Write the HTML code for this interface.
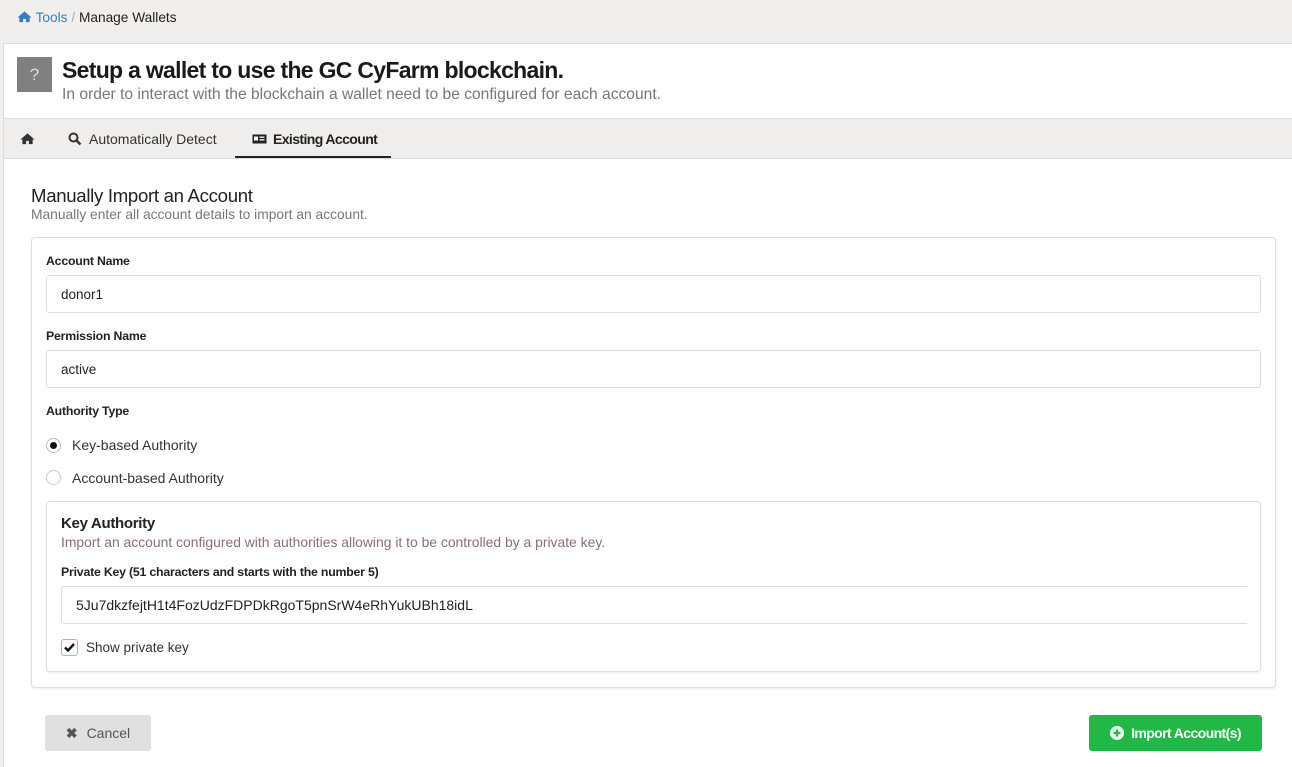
<!DOCTYPE html>
<html><head><meta charset="utf-8"><style>
*{box-sizing:border-box;margin:0;padding:0}
html,body{width:1292px;height:767px;overflow:hidden}
body{background:#f0efee;font-family:"Liberation Sans",sans-serif;color:#222;position:relative;font-size:13px}
.a{position:absolute;white-space:nowrap}
.inp{position:absolute;border:1px solid #ddd;border-radius:3px;background:#fff;font-size:13px;padding-left:14px;display:flex;align-items:center;color:#222}
.lbl{position:absolute;font-weight:bold;font-size:12.3px;letter-spacing:-0.2px}
</style></head><body>
<div class="a" style="left:17px;top:10px;font-size:13.7px"><svg width="15" height="13" viewBox="0 0 16 13" style="vertical-align:-1px"><path d="M8 1L0.5 7.5h2V12.5h4V9h3v3.5h4V7.5h2z" fill="#3a7bbf"/></svg> <span style="color:#3a7bbf">Tools</span> <span style="color:#aaa">/</span> Manage Wallets</div>
<div class="a" style="left:3px;top:43px;width:1289px;height:724px;background:#fff;border:1px solid #ddd;border-right:none;border-bottom:none"></div>
<div class="a" style="left:17px;top:57px;width:35px;height:35px;background:#808080;color:#ddd;font-size:17px;text-align:center;line-height:35px">?</div>
<div class="a" style="left:62px;top:57px;font-size:23px;font-weight:bold;letter-spacing:-0.7px;color:#1a1a1a">Setup a wallet to use the GC CyFarm blockchain.</div>
<div class="a" style="left:62px;top:86px;font-size:15.6px;color:#777">In order to interact with the blockchain a wallet need to be configured for each account.</div>
<div class="a" style="left:4px;top:118px;width:1288px;height:41px;background:#efeeed;border-top:1px solid #ddd;border-bottom:1px solid #ddd"></div>
<svg class="a" style="left:20px;top:132px" width="15" height="13" viewBox="0 0 16 13"><path d="M8 1L0.5 7.5h2V12.5h4V9h3v3.5h4V7.5h2z" fill="#333"/></svg>
<svg class="a" style="left:68px;top:132px" width="14" height="14" viewBox="0 0 14 14"><circle cx="5.5" cy="5.5" r="4" fill="none" stroke="#333" stroke-width="2"/><path d="M8.5 8.5L12.5 12.5" stroke="#333" stroke-width="2.4"/></svg>
<div class="a" style="left:89px;top:131px;font-size:14px;color:#333">Automatically Detect</div>
<div class="a" style="left:235px;top:156px;width:156px;height:2px;background:#222"></div>
<svg class="a" style="left:252px;top:134px" width="15" height="10" viewBox="0 0 15 10"><rect x="0.5" y="0.5" width="14" height="9" fill="#222"/><rect x="2" y="2.5" width="4" height="4" fill="#fff"/><rect x="7.5" y="2.5" width="5" height="1.3" fill="#fff"/><rect x="7.5" y="5.2" width="5" height="1.3" fill="#fff"/></svg>
<div class="a" style="left:273px;top:131px;font-size:14px;font-weight:bold;color:#222;letter-spacing:-0.6px">Existing Account</div>
<div class="a" style="left:31px;top:185px;font-size:18.6px;color:#222;letter-spacing:-0.3px">Manually Import an Account</div>
<div class="a" style="left:31px;top:207px;font-size:13.8px;color:#777">Manually enter all account details to import an account.</div>
<div class="a" style="left:31px;top:237px;width:1245px;height:451px;border:1px solid #ddd;border-radius:4px;box-shadow:0 1px 2px rgba(0,0,0,.08)"></div>
<div class="lbl" style="left:46px;top:254px">Account Name</div>
<div class="inp" style="left:46px;top:275px;width:1215px;height:38px;font-size:13.5px">donor1</div>
<div class="lbl" style="left:46px;top:329px">Permission Name</div>
<div class="inp" style="left:46px;top:350px;width:1215px;height:38px;font-size:13.5px">active</div>
<div class="lbl" style="left:46px;top:404px">Authority Type</div>
<div class="a" style="left:46px;top:438px;width:15px;height:15px;border:1px solid #bbb;border-radius:50%"><div style="position:absolute;left:3px;top:3px;width:7px;height:7px;border-radius:50%;background:#111"></div></div>
<div class="a" style="left:72px;top:437px;font-size:14px;color:#333">Key-based Authority</div>
<div class="a" style="left:46px;top:470px;width:15px;height:15px;border:1px solid #ccc;border-radius:50%"></div>
<div class="a" style="left:72px;top:470px;font-size:14px;color:#333">Account-based Authority</div>
<div class="a" style="left:46px;top:501px;width:1215px;height:171px;border:1px solid #ddd;border-radius:4px;box-shadow:0 1px 2px rgba(0,0,0,.08)"></div>
<div class="a" style="left:61px;top:515px;font-size:15px;font-weight:bold;color:#222;letter-spacing:-0.3px">Key Authority</div>
<div class="a" style="left:61px;top:534px;font-size:13.9px;color:#8a7070">Import an account configured with authorities allowing it to be controlled by a private key.</div>
<div class="lbl" style="left:61px;top:565px">Private Key (51 characters and starts with the number 5)</div>
<div class="inp" style="left:61px;top:586px;width:1186px;height:38px;border-right:none;border-radius:3px 0 0 3px;font-size:14px">5Ju7dkzfejtH1t4FozUdzFDPDkRgoT5pnSrW4eRhYukUBh18idL</div>
<div class="a" style="left:61px;top:639px;width:17px;height:17px;border:1px solid #9bb;border-radius:3px;background:#fff"><svg width="15" height="15" viewBox="0 0 15 15"><path d="M3 7.5l3 3 6-6.5" stroke="#111" stroke-width="2.4" fill="none"/></svg></div>
<div class="a" style="left:86px;top:640px;font-size:13.5px;color:#333">Show private key</div>
<div class="a" style="left:45px;top:715px;width:106px;height:36px;background:#e0e0e0;border-radius:3px;color:#555;font-size:14px;display:flex;align-items:center;justify-content:center"><span style="font-weight:bold;margin-right:9px">✖</span>Cancel</div>
<div class="a" style="left:1089px;top:715px;width:173px;height:36px;background:#22b845;border-radius:3px;color:#fff;font-size:14px;font-weight:bold;letter-spacing:-0.6px;display:flex;align-items:center;justify-content:center"><svg width="14" height="14" viewBox="0 0 14 14" style="margin-right:7px"><circle cx="7" cy="7" r="7" fill="#e8f7ec"/><path d="M7 3.5v7M3.5 7h7" stroke="#22b845" stroke-width="2.2"/></svg>Import Account(s)</div>
</body></html>
